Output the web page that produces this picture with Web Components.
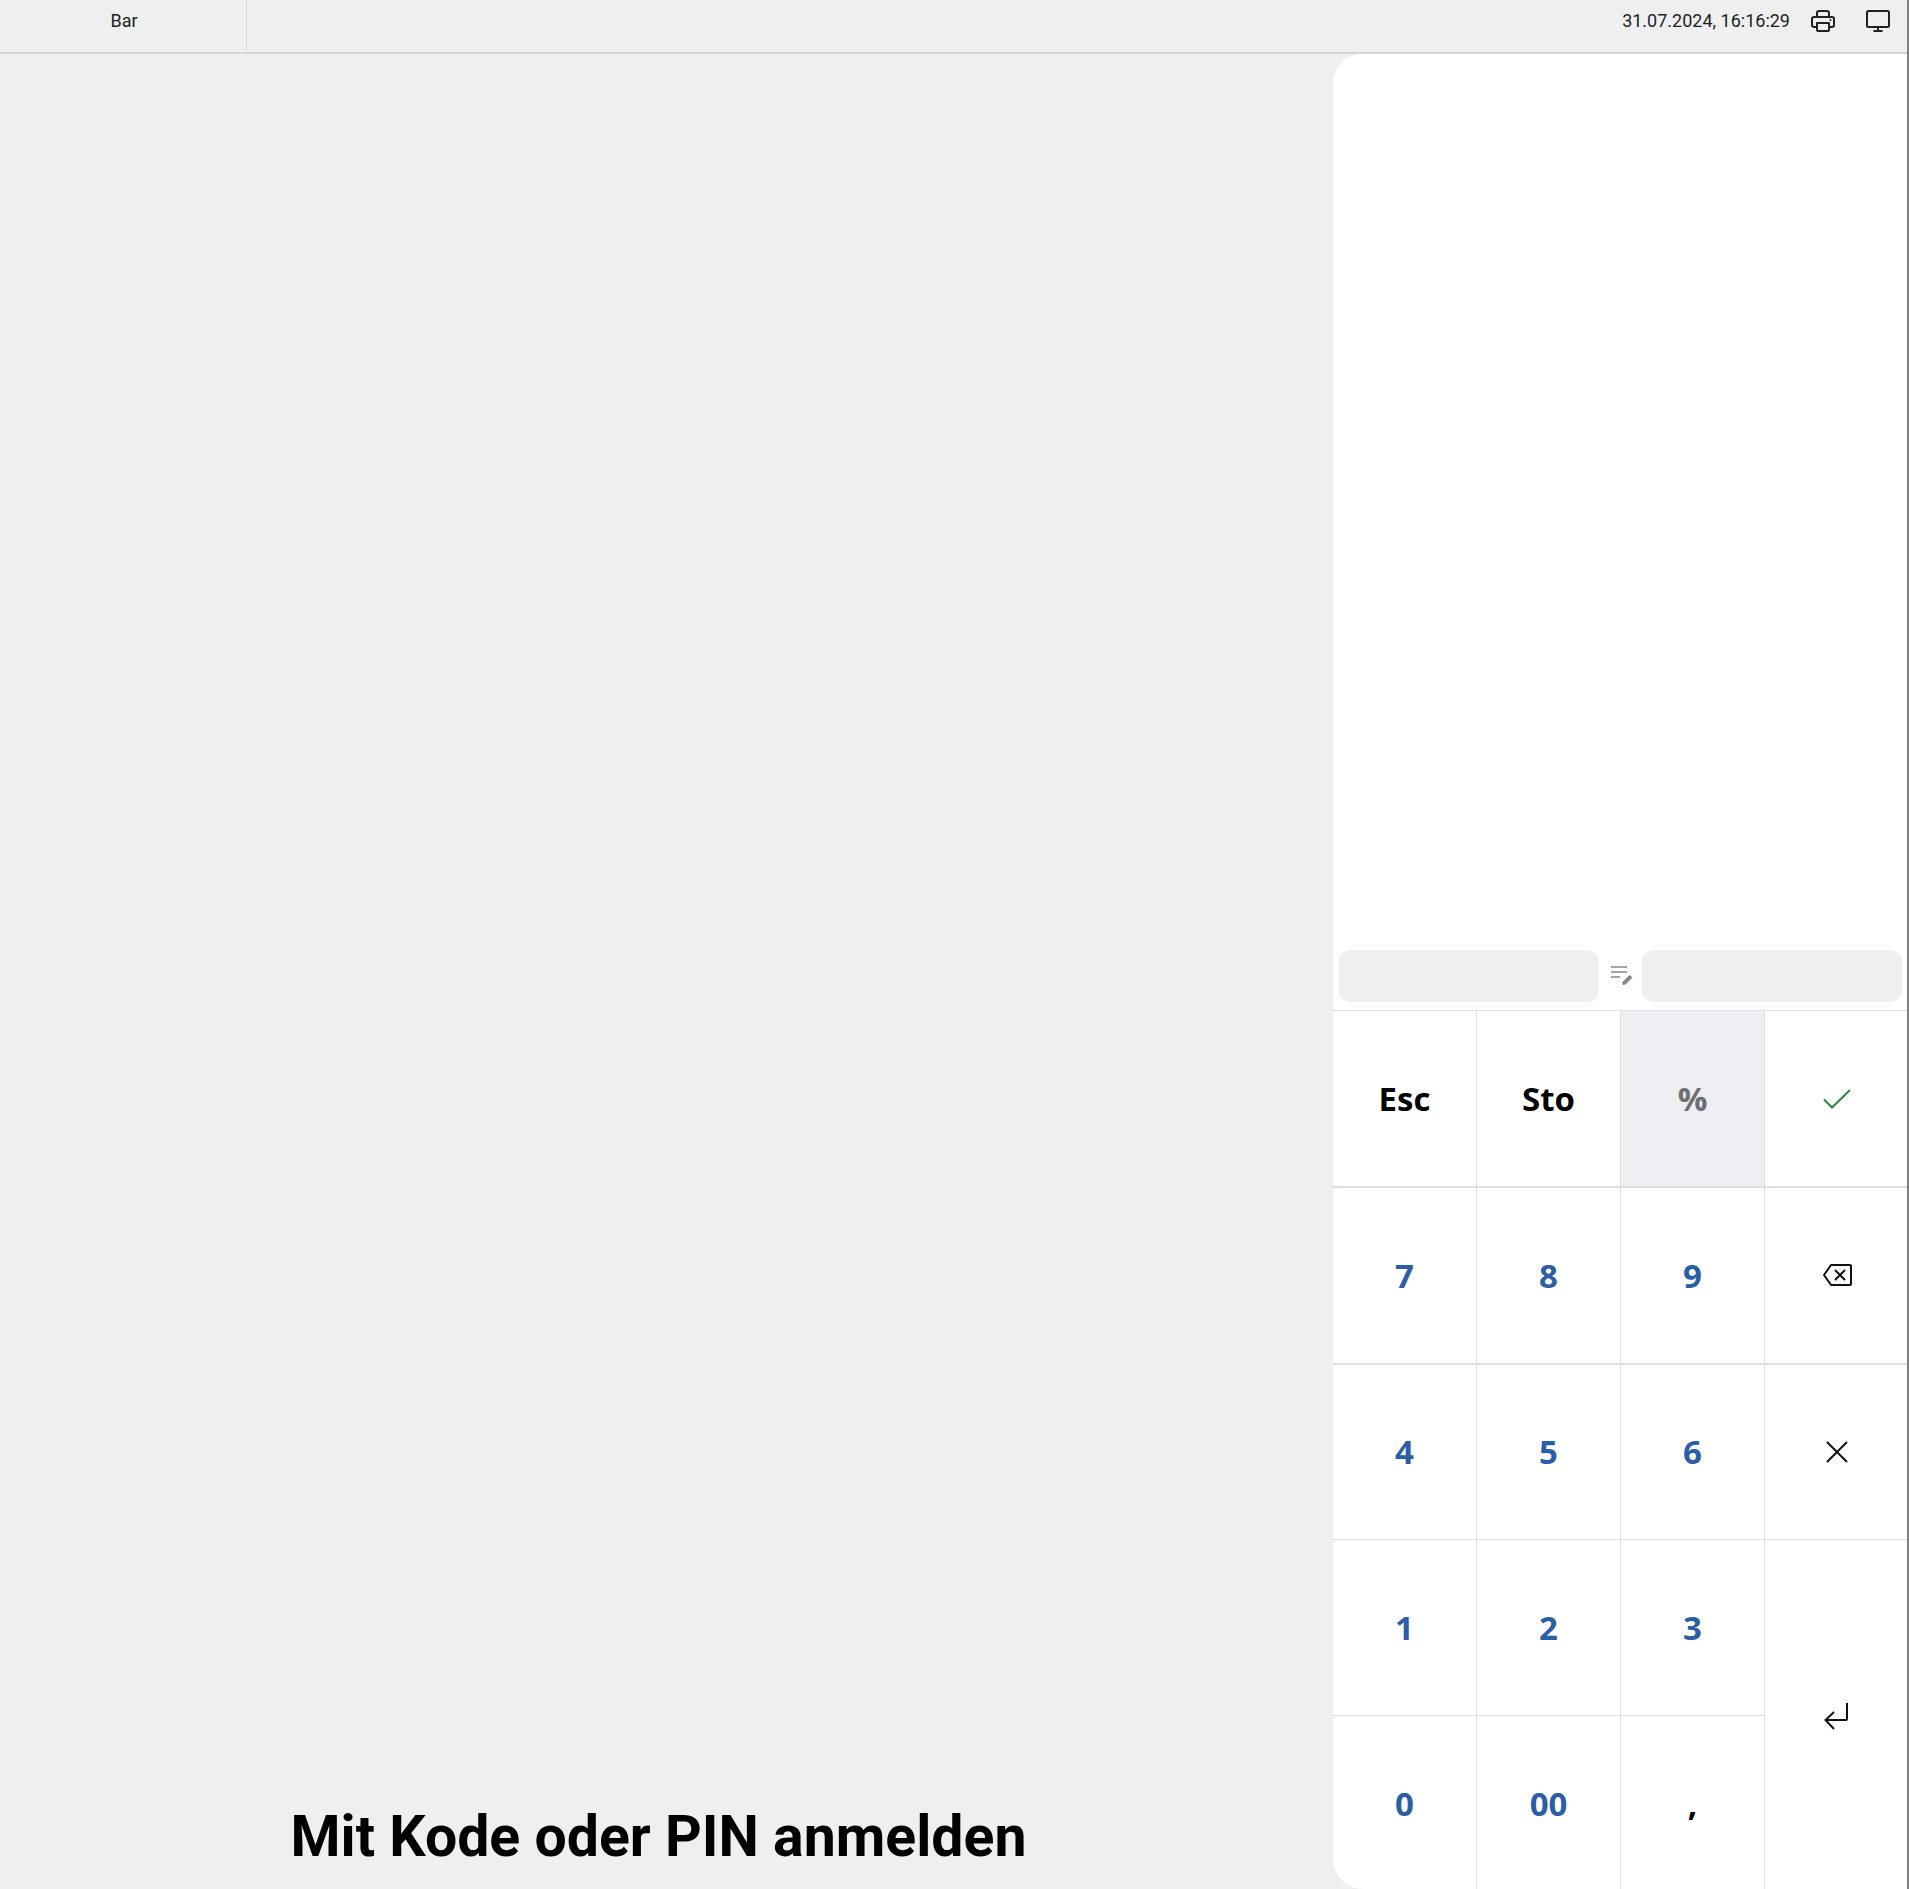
<!DOCTYPE html>
<html lang="de">
<head>
<meta charset="utf-8">
<title>Kasse</title>
<style>
  html, body { margin: 0; height: 100%; }
  body { background: #eeeff1; font-family: Roboto, sans-serif; }
</style>
</head>
<body>
<pos-app>
  <pos-topbar slot="top" section="Bar" time="31.07.2024, 16:16:29"></pos-topbar>
  <pos-login slot="main">Mit Kode oder PIN anmelden</pos-login>
  <pos-keypad slot="side"></pos-keypad>
</pos-app>

<script>
// Icons are kept in one place so the keypad and the top bar can share them
const ICONS = {
  printer: `<svg width="24" height="22" viewBox="0 0 24 22" fill="none" stroke="#222" stroke-width="2" stroke-linejoin="round">
    <path d="M6 7V3a2 2 0 0 1 2-2h8a2 2 0 0 1 2 2v4"/>
    <path d="M6 17H3a2 2 0 0 1-2-2V9a2 2 0 0 1 2-2h18a2 2 0 0 1 2 2v6a2 2 0 0 1-2 2h-3"/>
    <path d="M6 13h12v7a1 1 0 0 1-1 1H7a1 1 0 0 1-1-1z"/>
    <circle cx="19.5" cy="10" r="1" fill="#222" stroke="none"/>
  </svg>`,
  monitor: `<svg width="24" height="22" viewBox="0 0 24 22" fill="none" stroke="#222" stroke-width="2">
    <rect x="1" y="1" width="22" height="16" rx="1.500"/>
    <path d="M12 17v4M7.500 21h9"/>
  </svg>`,
  note: `<svg width="23" height="20" viewBox="0 0 23 20" fill="none" stroke="#85878b" stroke-width="1.500">
    <path d="M0 1h16M0 6h16M0 11h9"/>
    <path d="M12 16l6.500-6.500 2.500 2-6.500 6.500-2.500 .5z" fill="#85878b" stroke-width="1" stroke-linejoin="round"/>
  </svg>`,
  check: `<svg style="margin-left:2px" width="28" height="20" viewBox="0 0 28 20" fill="none" stroke="#2e8540" stroke-width="2">
    <path d="M1 10.500l8 8L27 1"/>
  </svg>`,
  backspace: `<svg style="margin-left:2px" width="29" height="22" viewBox="0 0 29 22" fill="none" stroke="#111" stroke-width="2" stroke-linejoin="round">
    <path d="M8 1h19a1 1 0 0 1 1 1v18a1 1 0 0 1-1 1H8l-7-10z"/>
    <path d="M12 6l10 10M22 6l-10 10"/>
  </svg>`,
  close: `<svg style="margin-left:2px" width="22" height="22" viewBox="0 0 22 22" fill="none" stroke="#111" stroke-width="2">
    <path d="M1 1l20 20M21 1L1 21"/>
  </svg>`,
  enter: `<svg style="margin-top:2px" width="24" height="27" viewBox="0 0 24 27" fill="none" stroke="#111" stroke-width="2">
    <path d="M23 0v16a1 1 0 0 1-1 1H2"/>
    <path d="M10 9l-8.500 8L10 26"/>
  </svg>`,
};

class PosApp extends HTMLElement {
  constructor() {
    super();
    this.attachShadow({ mode: 'open' });
    this.shadowRoot.innerHTML = `
      <style>
        :host {
          display: flex;
          flex-direction: column;
          height: 1889px;
          overflow: hidden;
          box-sizing: border-box;
          border-right: 2px solid #808080;
        }
        .body { flex: 1; display: flex; min-height: 0; }
      </style>
      <slot name="top"></slot>
      <div class="body">
        <slot name="main"></slot>
        <slot name="side"></slot>
      </div>
    `;
  }
}

class PosTopbar extends HTMLElement {
  constructor() {
    super();
    this.attachShadow({ mode: 'open' });
    this.shadowRoot.innerHTML = `
      <style>
        :host {
          display: flex;
          align-items: flex-start;
          height: 54px;
          box-sizing: border-box;
          border-bottom: 2px solid #d4d6d9;
          font: 18px/1 Roboto, sans-serif;
          color: #1d1f22;
        }
        .section {
          width: 247px;
          height: 50px;
          padding: 0 0 9px 2px;
          box-sizing: border-box;
          display: flex;
          align-items: center;
          justify-content: center;
          border-right: 1px solid #d4d6d9;
        }
        .right {
          margin-left: auto;
          height: 42px;
          display: flex;
          align-items: center;
          padding-right: 17px;
        }
        .time { margin-right: 21px; }
        .right svg { display: block; }
        .printer { margin-right: 31px; }
      </style>
      <div class="section">${this.getAttribute('section')}</div>
      <div class="right">
        <span class="time">${this.getAttribute('time')}</span>
        <span class="printer">${ICONS.printer}</span>
        <span>${ICONS.monitor}</span>
      </div>
    `;
  }
}

class PosLogin extends HTMLElement {
  constructor() {
    super();
    this.attachShadow({ mode: 'open' });
    this.shadowRoot.innerHTML = `
      <style>
        :host {
          flex: 1;
          display: flex;
          align-items: flex-end;
          justify-content: center;
          padding: 0 16px 19px 0;
          font: 700 57.2px/66px Roboto, sans-serif;
          color: #000;
        }
      </style>
      <slot></slot>
    `;
  }
}

class PosKey extends HTMLElement {
  constructor() {
    super();
    this.attachShadow({ mode: 'open' });
    this.shadowRoot.innerHTML = `
      <style>
        :host {
          display: flex;
          align-items: center;
          justify-content: center;
          box-sizing: border-box;
          border-left: 1px solid #dcdfe3;
          border-top: 1px solid #dcdfe3;
          font: 700 33px/1 "Open Sans", sans-serif;
          color: #000;
        }
        :host([tone="num"]) { color: #2a5ea7; }
        :host([tone="off"]) { color: #6d6f74; background: #eeeff2; }
        :host([first]) { border-left: 0; }
        :host([heavy]) { border-top-width: 2px; }
        :host([tall]) { grid-row: span 2; }
        ::slotted(svg) { display: block; }
      </style>
      <slot></slot>
    `;
  }
}

class PosKeypad extends HTMLElement {
  constructor() {
    super();
    this.attachShadow({ mode: 'open' });
    this.shadowRoot.innerHTML = `
      <style>
        :host {
          width: 574px;
          display: flex;
          flex-direction: column;
          background: #fff;
          border-radius: 30px 0 0 30px;
          overflow: hidden;
        }
        .spacer { flex: 1; }
        .fields {
          display: flex;
          align-items: center;
          padding: 0 5px 8px 6px;
        }
        .field {
          flex: 1;
          height: 52px;
          border-radius: 12px;
          background: #eeeff1;
        }
        .fields svg { display: block; margin: 0 8px 0 12px; }
        .keys {
          flex: 0 0 879px;
          min-height: 0;
          display: grid;
          grid-template-columns: 143px 144px 144px 143px;
          grid-template-rows: repeat(5, 176.3px);
        }
      </style>
      <div class="spacer"></div>
      <div class="fields">
        <div class="field"></div>
        ${ICONS.note}
        <div class="field"></div>
      </div>
      <div class="keys"></div>
    `;

    const keys = [
      ['Esc'], ['Sto'], ['%', 'off'], [ICONS.check],
      ['7', 'num'], ['8', 'num'], ['9', 'num'], [ICONS.backspace],
      ['4', 'num'], ['5', 'num'], ['6', 'num'], [ICONS.close],
      ['1', 'num'], ['2', 'num'], ['3', 'num'], [ICONS.enter, '', 'tall'],
      ['0', 'num'], ['00', 'num'], [','],
    ];
    const grid = this.shadowRoot.querySelector('.keys');
    keys.forEach(([label, tone, tall], i) => {
      const key = document.createElement('pos-key');
      key.innerHTML = label;
      if (tone) key.setAttribute('tone', tone);
      if (tall) key.setAttribute('tall', '');
      if (i % 4 === 0) key.setAttribute('first', '');
      if (i >= 4 && i < 12) key.setAttribute('heavy', '');
      grid.appendChild(key);
    });
  }
}

customElements.define('pos-app', PosApp);
customElements.define('pos-topbar', PosTopbar);
customElements.define('pos-login', PosLogin);
customElements.define('pos-key', PosKey);
customElements.define('pos-keypad', PosKeypad);
</script>
</body>
</html>
